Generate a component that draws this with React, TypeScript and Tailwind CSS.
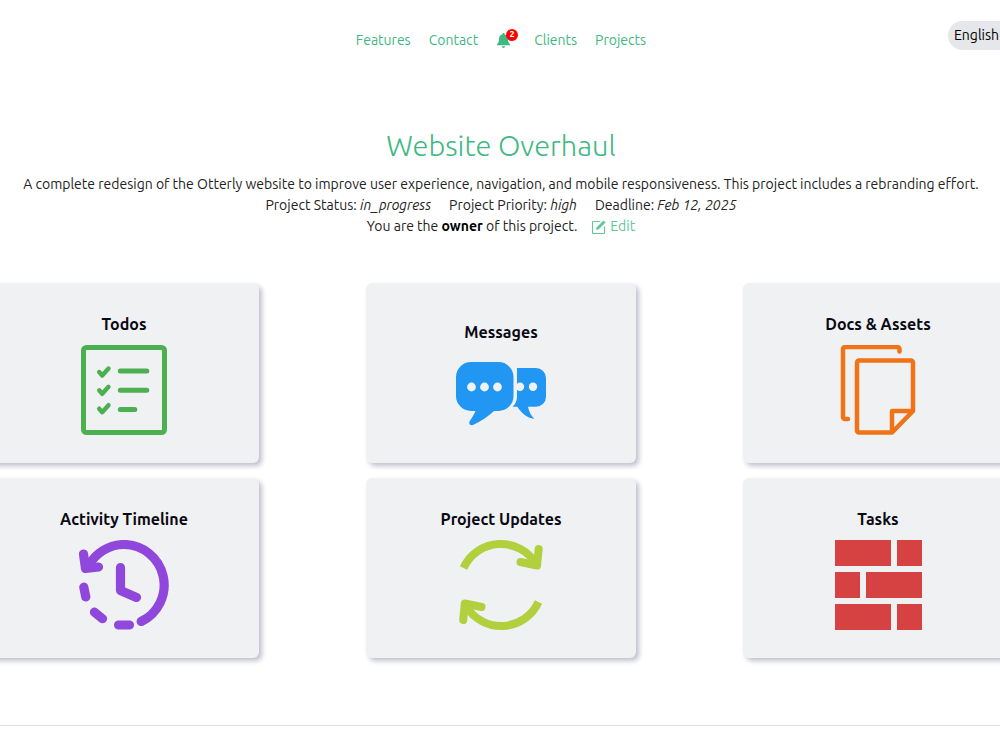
import type { ReactNode } from "react";

const linkClass = "text-[#41b883] hover:underline";

type Tile = { title: string; href: string; icon: ReactNode };

function TodosIcon() {
  return (
    <svg viewBox="0 0 90 90" className="size-[90px]" fill="none" stroke="#4caf50" strokeLinecap="round" strokeLinejoin="round">
      <rect x="4.5" y="2.5" width="81" height="85" rx="3" strokeWidth="5" />
      {[27, 45.3, 63.7].map((y) => (
        <path key={y} d={`M20.2 ${y} l3 3.5 l6.3 -7`} strokeWidth="4.4" />
      ))}
      <path d="M41.3 26h26.500M41.3 45.300h26.500M41.3 64.600h14.500" strokeWidth="5" />
    </svg>
  );
}

function MessagesIcon() {
  return (
    <svg viewBox="0 -9 90 74" className="h-[74px] w-[90px]">
      <path
        fill="#2196f3"
        d="M15 0h27.500a15 15 0 0 1 15 15v19a15 15 0 0 1-15 15h-4.500C32 54.500 25 59.500 17 63c-2.500 1-4.500-1-3.500-3.500C15.500 56 18 53 19.500 49H15A15 15 0 0 1 0 34V15A15 15 0 0 1 15 0Z"
      />
      <path
        fill="#2196f3"
        d="M61 6H80a10 10 0 0 1 10 10v18.700a10 10 0 0 1-10 10h-8c1 4.800 3 8.800 6.300 12.300-7.500-1.500-13-6-17-12.300h-4.800c3-2.500 4.500-6 4.500-10Z"
      />
      <g fill="#f0f1f3">
        <circle cx="15.500" cy="25" r="4.400" />
        <circle cx="28.500" cy="25" r="4.400" />
        <circle cx="41.500" cy="25" r="4.400" />
        <circle cx="64" cy="24.700" r="4.200" />
        <circle cx="77" cy="24.700" r="4.200" />
      </g>
    </svg>
  );
}

function DocsIcon() {
  return (
    <svg viewBox="0 0 90 90" className="size-[90px]" fill="none" stroke="#f07318" strokeWidth="4.500" strokeLinecap="round" strokeLinejoin="round">
      <path d="M66.500 6.500V4a2 2 0 0 0-2-2H12a2 2 0 0 0-2 2v68a2 2 0 0 0 2 2h3" />
      <path d="M26 15.500h52a2 2 0 0 1 2 2V66L59 87.500H26a2 2 0 0 1-2-2v-68a2 2 0 0 1 2-2Z" />
      <path d="M59 87V66h20.500" />
    </svg>
  );
}

function TimelineIcon() {
  return (
    <svg viewBox="0 0 90 90" className="size-[90px]" fill="none" stroke="#9048dc" strokeWidth="9.200" strokeLinecap="round" strokeLinejoin="round">
      <path d="M9.500 26A40.500 40.500 0 0 1 45 4.500A40.500 40.500 0 0 1 62.200 81.500" />
      <path d="M4.500 14L6.500 28.500L19.500 27" fill="#9048dc" />
      <path d="M41.500 27.500v23l16 7" />
      <path d="M4.800 47.200l2 9.800M15.500 72.200l8 6.500M39.500 85h11" />
    </svg>
  );
}

function UpdatesIcon() {
  return (
    <svg viewBox="0 0 90 90" className="size-[90px]" fill="none" stroke="#b2d03e" strokeWidth="8" strokeLinejoin="round">
      <path d="M7.500 28A41 41 0 0 1 80 24" />
      <path d="M82.700 9L81 25.500L64.500 22" strokeLinecap="round" />
      <path d="M82.500 62A41 41 0 0 1 10 66" />
      <path d="M7.200 80L8.800 63.500L25.500 67" strokeLinecap="round" />
    </svg>
  );
}

function TasksIcon() {
  return (
    <svg viewBox="0 0 90 90" className="size-[90px]" fill="#d64141">
      <path d="M2 0h56v26H2zM64 0h25v26H64zM2 32h25v26H2zM33 32h56v26H33zM2 64h56v26H2zM64 64h25v26H64z" />
    </svg>
  );
}

const TILES: Tile[] = [
  { title: "Todos", href: "#todos", icon: <TodosIcon /> },
  { title: "Messages", href: "#messages", icon: <MessagesIcon /> },
  { title: "Docs & Assets", href: "#docs", icon: <DocsIcon /> },
  { title: "Activity Timeline", href: "#timeline", icon: <TimelineIcon /> },
  { title: "Project Updates", href: "#updates", icon: <UpdatesIcon /> },
  { title: "Tasks", href: "#tasks", icon: <TasksIcon /> },
];

function Header() {
  return (
    <header className="grid grid-cols-[1fr_auto_1fr] items-start pt-5 pl-0.5">
      <nav className="col-start-2 flex items-center gap-[18px] pt-2 leading-6">
        <a href="#features" className={linkClass}>Features</a>
        <a href="#contact" className={linkClass}>Contact</a>
        <a href="#notifications" aria-label="Notifications" className="relative mr-1 w-4 text-[#41b883]">
          <svg viewBox="0 0 14 16" className="ml-px h-[15px] w-[13px]" fill="currentColor">
            <path d="M7 16c1 0 1.700-.9 1.900-1.800H5.100C5.300 15.100 6 16 7 16M7 0c-.7 0-1.200.500-1.200 1.200C3.300 1.800 2.300 3.900 2.200 6.200 2.100 9.300 1.400 11 0 12v1.200h14V12c-1.400-1-2.100-2.700-2.200-5.800C11.700 3.900 10.700 1.800 8.200 1.200 8.200.500 7.700 0 7 0" />
          </svg>
          <span className="absolute -top-1 left-2.5 flex size-3 items-center justify-center rounded-full bg-[#f00] text-[9px] leading-none font-bold text-white">
            2
          </span>
        </a>
        <a href="#clients" className={linkClass}>Clients</a>
        <a href="#projects" className={linkClass}>Projects</a>
      </nav>
      <select
        aria-label="Language"
        defaultValue="en"
        className="mt-px -mr-7 h-[29px] w-20 appearance-none justify-self-end rounded-full bg-gray-200 px-1.5 text-black"
      >
        <option value="en">English</option>
        <option value="fr">Français</option>
      </select>
    </header>
  );
}

function ProjectSummary() {
  return (
    <section className="mt-[75px] text-center">
      <h1 className="text-[29px] leading-9 font-light text-[#41b883]">Website Overhaul</h1>
      <div className="mt-[11px] leading-[21px]">
        <p>
          A complete redesign of the Otterly website to improve user experience, navigation, and mobile
          responsiveness. This project includes a rebranding effort.
        </p>
        <p className="flex justify-center gap-[18px]">
          <span>Project Status: <em>in_progress</em></span>
          <span>Project Priority: <em>high</em></span>
          <span>Deadline: <em>Feb 12, 2025</em></span>
        </p>
        <p className="flex justify-center gap-[15px]">
          <span>You are the <strong className="text-black">owner</strong> of this project.</span>
          <a href="#edit" className="flex items-center gap-1 text-[#5cc898]">
            <svg viewBox="0 0 14 14" className="size-3.5" fill="none" stroke="currentColor">
              <path d="M8 1.500H.500v12h12V6.500" />
              <path d="M4.300 9.800l.7-2.500L11.500.800l1.700 1.700L6.700 9.100z" fill="currentColor" strokeWidth=".5" />
            </svg>
            Edit
          </a>
        </p>
      </div>
    </section>
  );
}

export default function App() {
  return (
    <div className="overflow-x-hidden bg-white font-['Ubuntu','Noto_Sans',sans-serif] text-[14px] text-[#222]">
      <Header />
      <main className="pl-0.5">
        <ProjectSummary />
        <div className="mt-[46px] grid grid-cols-[repeat(3,270px)] justify-center gap-x-[107px] gap-y-[15px]">
          {TILES.map((t) => (
            <a
              key={t.title}
              href={t.href}
              className="flex h-[180px] flex-col items-center justify-center gap-[9px] rounded-md bg-[#f0f1f3] text-[16px] leading-6 font-bold text-[#0a0a14] shadow-[3px_3px_5px_#c0c0d0]"
            >
              <h2>{t.title}</h2>
              {t.icon}
            </a>
          ))}
        </div>
      </main>
      <footer className="mt-[67px] h-6 border-t border-[#ddd]" />
    </div>
  );
}
